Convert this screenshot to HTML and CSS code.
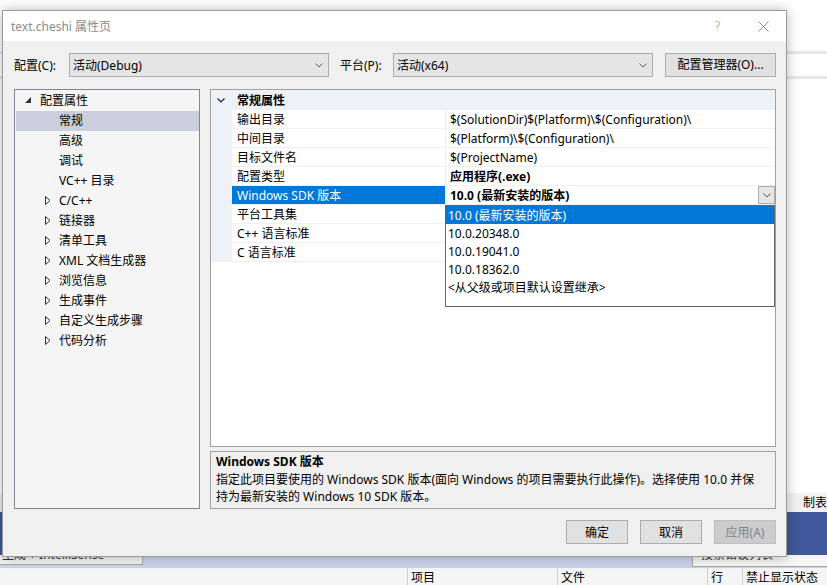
FILE: index.html
```html
<!DOCTYPE html>
<html lang="zh-CN">
<head>
<meta charset="utf-8">
<title>text.cheshi 属性页</title>
<link rel="stylesheet" href="styles.css">
</head>
<body>
<div class="ide">
  <div class="ide-top">
    <div class="ide-line"></div>
    <div class="ide-line"></div>
  </div>
  <div class="ide-tabhead">制表符</div>
  <div class="ide-blue"></div>
  <div class="ide-tool">
    <div class="ide-combo"><span class="clip-text">生成 + IntelliSense</span></div>
    <div class="ide-search"><span class="clip-text">搜索错误列表</span></div>
  </div>
  <div class="ide-cols">
    <div class="col col-first"></div>
    <div class="col col-proj">项目</div>
    <div class="col col-file">文件</div>
    <div class="col col-line">行</div>
    <div class="col col-state">禁止显示状态</div>
  </div>
</div>

<div class="dialog">
  <div class="titlebar">
    <span class="title">text.cheshi 属性页</span>
    <span class="tb-help">?</span>
    <span class="tb-close"><svg width="11" height="11" viewBox="0 0 11 11"><path d="M0.5 0.5 L10.5 10.5 M10.5 0.5 L0.5 10.5" stroke="#8a8a8a" stroke-width="1" fill="none"/></svg></span>
  </div>
  <div class="body">
    <div class="config-row">
      <span class="lbl lbl-conf">配置(C):</span>
      <div class="combo"><span>活动(Debug)</span><svg class="chev" width="8" height="5" viewBox="0 0 8 5"><path d="M0.5 0.5 L4 4 L7.5 0.5" stroke="#606060" fill="none"/></svg></div>
      <span class="lbl lbl-plat">平台(P):</span>
      <div class="combo"><span>活动(x64)</span><svg class="chev" width="8" height="5" viewBox="0 0 8 5"><path d="M0.5 0.5 L4 4 L7.5 0.5" stroke="#606060" fill="none"/></svg></div>
      <div class="btn btn-mgr">配置管理器(O)...</div>
    </div>
    <div class="main">
      <div class="tree">
        <div class="trow lvl0"><span class="exp"><svg width="6" height="6" viewBox="0 0 6 6"><polygon points="6,0 6,6 0,6" fill="#333"/></svg></span>配置属性</div>
        <div class="trow lvl1 sel"><span class="exp"></span>常规</div>
        <div class="trow lvl1"><span class="exp"></span>高级</div>
        <div class="trow lvl1"><span class="exp"></span>调试</div>
        <div class="trow lvl1"><span class="exp"></span>VC++ 目录</div>
        <div class="trow lvl1"><span class="exp"><svg width="6" height="9" viewBox="0 0 6 9"><polygon points="0.5,0.5 5,4.5 0.5,8.5" fill="none" stroke="#333"/></svg></span>C/C++</div>
        <div class="trow lvl1"><span class="exp"><svg width="6" height="9" viewBox="0 0 6 9"><polygon points="0.5,0.5 5,4.5 0.5,8.5" fill="none" stroke="#333"/></svg></span>链接器</div>
        <div class="trow lvl1"><span class="exp"><svg width="6" height="9" viewBox="0 0 6 9"><polygon points="0.5,0.5 5,4.5 0.5,8.5" fill="none" stroke="#333"/></svg></span>清单工具</div>
        <div class="trow lvl1"><span class="exp"><svg width="6" height="9" viewBox="0 0 6 9"><polygon points="0.5,0.5 5,4.5 0.5,8.5" fill="none" stroke="#333"/></svg></span>XML 文档生成器</div>
        <div class="trow lvl1"><span class="exp"><svg width="6" height="9" viewBox="0 0 6 9"><polygon points="0.5,0.5 5,4.5 0.5,8.5" fill="none" stroke="#333"/></svg></span>浏览信息</div>
        <div class="trow lvl1"><span class="exp"><svg width="6" height="9" viewBox="0 0 6 9"><polygon points="0.5,0.5 5,4.5 0.5,8.5" fill="none" stroke="#333"/></svg></span>生成事件</div>
        <div class="trow lvl1"><span class="exp"><svg width="6" height="9" viewBox="0 0 6 9"><polygon points="0.5,0.5 5,4.5 0.5,8.5" fill="none" stroke="#333"/></svg></span>自定义生成步骤</div>
        <div class="trow lvl1"><span class="exp"><svg width="6" height="9" viewBox="0 0 6 9"><polygon points="0.5,0.5 5,4.5 0.5,8.5" fill="none" stroke="#333"/></svg></span>代码分析</div>
      </div>
      <div class="right">
        <div class="grid">
          <div class="ghead"><svg class="gchev" width="8" height="5" viewBox="0 0 8 5"><path d="M0.5 0.5 L4 4 L7.5 0.5" stroke="#222" stroke-width="1.2" fill="none"/></svg><span class="gcat">常规属性</span></div>
          <div class="prow"><div class="gut"></div><div class="pname">输出目录</div><div class="pval">$(SolutionDir)$(Platform)\$(Configuration)\</div></div>
          <div class="prow"><div class="gut"></div><div class="pname">中间目录</div><div class="pval">$(Platform)\$(Configuration)\</div></div>
          <div class="prow"><div class="gut"></div><div class="pname">目标文件名</div><div class="pval">$(ProjectName)</div></div>
          <div class="prow"><div class="gut"></div><div class="pname">配置类型</div><div class="pval bold">应用程序(.exe)</div></div>
          <div class="prow"><div class="gut"></div><div class="pname psel">Windows SDK 版本</div><div class="pval bold"><span>10.0 (最新安装的版本)</span><span class="dd-btn"><svg width="8" height="5" viewBox="0 0 8 5"><path d="M0.5 0.5 L4 4 L7.5 0.5" stroke="#555" fill="none"/></svg></span></div></div>
          <div class="prow"><div class="gut"></div><div class="pname">平台工具集</div><div class="pval"></div></div>
          <div class="prow"><div class="gut"></div><div class="pname">C++ 语言标准</div><div class="pval"></div></div>
          <div class="prow"><div class="gut"></div><div class="pname">C 语言标准</div><div class="pval"></div></div>
          <div class="ddlist">
            <div class="dd-item hi">10.0 (最新安装的版本)</div>
            <div class="dd-item">10.0.20348.0</div>
            <div class="dd-item">10.0.19041.0</div>
            <div class="dd-item">10.0.18362.0</div>
            <div class="dd-item">&lt;从父级或项目默认设置继承&gt;</div>
          </div>
        </div>
        <div class="desc">
          <div class="desc-title">Windows SDK 版本</div>
          <div class="desc-text">指定此项目要使用的 Windows SDK 版本(面向 Windows 的项目需要执行此操作)。选择使用 10.0 并保<br>持为最新安装的 Windows 10 SDK 版本。</div>
        </div>
      </div>
    </div>
    <div class="buttons">
      <div class="btn">确定</div>
      <div class="btn">取消</div>
      <div class="btn disabled">应用(A)</div>
    </div>
  </div>
</div>
</body>
</html>
```

FILE: styles.css
```css
* { box-sizing: border-box; }
html, body { margin: 0; padding: 0; }
body {
  width: 827px;
  height: 585px;
  overflow: hidden;
  position: relative;
  background: #fff;
  font-family: "Noto Sans", "Noto Sans CJK SC", sans-serif;
  font-size: 12px;
  color: #000;
}

/* background IDE */
.ide { display: flex; flex-direction: column; height: 585px; }
.ide-top { height: 493px; padding-top: 51px; background: #fff; }
.ide-line { height: 3px; background: #e6e6ef; }
.ide-line + .ide-line { margin-top: 22px; }
.ide-tabhead {
  height: 19px; background: #f2f2f2; padding-left: 803px;
  line-height: 19px; white-space: nowrap; overflow: hidden;
}
.ide-blue { height: 43px; background: #41589a; }
.ide-tool {
  height: 13px; background: #cbd3ea;
  display: flex; justify-content: space-between; align-items: flex-start;
}
.ide-combo {
  width: 143px; height: 10px; background: #f3f3f3;
  border-right: 1px solid #a8a8a8; border-bottom: 1px solid #a8a8a8;
  overflow: hidden; padding-left: 2px;
}
.ide-search {
  width: 135px; height: 12px; background: #f5f5f5;
  border-left: 1px solid #a8a8a8; border-bottom: 1px solid #a8a8a8;
  overflow: hidden; padding-left: 8px;
}
.clip-text { display: block; line-height: 16px; margin-top: -8px; white-space: nowrap; color: #333; }
.ide-cols { flex: 1; background: #f5f5f5; display: flex; line-height: 20px; white-space: nowrap; overflow: hidden; }
.col { padding-left: 3px; border-left: 1px solid #d0d0d0; }
.col-first { width: 407px; border-left: none; }
.col-proj { width: 150px; }
.col-file { width: 150px; }
.col-line { width: 35px; }
.col-state { flex: 1; }

/* dialog */
.dialog {
  position: absolute;
  left: 2px; top: 10px;
  width: 785px; height: 547px;
  border: 1px solid #9b9b9b;
  background: #f0f0f0;
  box-shadow: 0 0 12px rgba(0, 0, 0, 0.28);
  display: flex; flex-direction: column;
}
.titlebar {
  height: 30px; background: #fff;
  display: flex; align-items: center;
  padding-left: 8px;
}
.title { color: #8c8c8c; }
.tb-help {
  margin-left: auto; width: 45px; text-align: center;
  color: #8a8a8a; font-size: 14px; font-family: "DejaVu Sans", sans-serif; font-weight: 200;
}
.tb-close { width: 46px; display: flex; justify-content: center; align-items: center; }

.body {
  flex: 1;
  padding: 12px 10px 0 11px;
  display: flex; flex-direction: column;
}
.config-row { display: flex; align-items: center; height: 24px; }
.lbl { white-space: nowrap; }
.lbl-conf { width: 55px; }
.lbl-plat { width: 53px; margin-left: 11px; }
.combo {
  width: 260px; height: 24px;
  background: #e5e5e5; border: 1px solid #acacac;
  display: flex; align-items: center;
  padding: 0 5px 0 3px;
}
.combo .chev { margin-left: auto; }
.btn {
  width: 62px; height: 24px;
  background: #e1e1e1; border: 1px solid #adadad;
  text-align: center; line-height: 22px; padding-top: 1px; white-space: nowrap;
}
.btn-mgr { width: 111px; margin-left: 12px; padding-top: 0; }
.btn.disabled { background: #cccccc; border-color: #bfbfbf; color: #838383; }

.main { margin-top: 12px; height: 420px; display: flex; gap: 10px; }

/* tree */
.tree {
  width: 186px; height: 420px;
  border: 1px solid #828790; background: #f5f5f5;
  padding-top: 1px;
}
.trow { height: 20px; line-height: 19px; padding-bottom: 1px; display: flex; white-space: nowrap; }
.trow .exp { display: flex; align-items: center; flex-shrink: 0; }
.lvl0 { padding-left: 10px; }
.lvl0 .exp { width: 15px; padding-bottom: 1px; }
.lvl1 { padding-left: 30px; }
.lvl1 .exp { width: 14px; }
.trow.sel { background: #cccedb; margin-left: 1px; padding-left: 29px; }

/* property grid */
.right { width: 566px; display: flex; flex-direction: column; gap: 4px; }
.grid {
  position: relative;
  height: 358px;
  border: 1px solid #a0a0a0;
  background: #fff;
}
.ghead {
  height: 20px; background: #eef1f6;
  display: flex; align-items: center;
  padding-left: 6px;
}
.gchev { margin-right: 12px; }
.gcat { font-weight: bold; }
.prow { display: flex; height: 19px; }
.gut { width: 21px; background: #eef1f6; }
.pname {
  width: 213px; padding-left: 5px; padding-top: 1px; line-height: 18px;
  border-bottom: 1px solid #f0f0f0; white-space: nowrap;
}
.pname.psel { background: #0078d7; color: #fff; border-bottom-color: #f0f0f0; }
.pval {
  flex: 1; padding-left: 4px; padding-top: 1px; line-height: 18px;
  border-left: 1px solid #f0f0f0; border-bottom: 1px solid #f0f0f0;
  white-space: nowrap; display: flex; align-items: flex-start;
}
.bold { font-weight: bold; }
.dd-btn {
  margin-left: auto; margin-top: -1px; width: 17px; height: 18px;
  background: #e5e5e5; border: 1px solid #acacac;
  display: flex; align-items: center; justify-content: center;
}
.ddlist {
  position: absolute;
  left: 234px; top: 115px;
  width: 330px; height: 102px;
  border: 1px solid #646464;
  background: #fff;
}
.dd-item { height: 18px; line-height: 18px; padding-top: 1px; padding-left: 2px; white-space: nowrap; }
.dd-item.hi { background: #0078d7; color: #fff; }

/* description */
.desc {
  height: 58px;
  border: 1px solid #a0a0a0;
  padding: 1px 5px 0;
}
.desc-title { font-weight: bold; line-height: 18px; }
.desc-text { line-height: 17px; white-space: nowrap; }

.buttons {
  margin-top: 11px;
  display: flex; justify-content: flex-end; gap: 12px;
}
```
